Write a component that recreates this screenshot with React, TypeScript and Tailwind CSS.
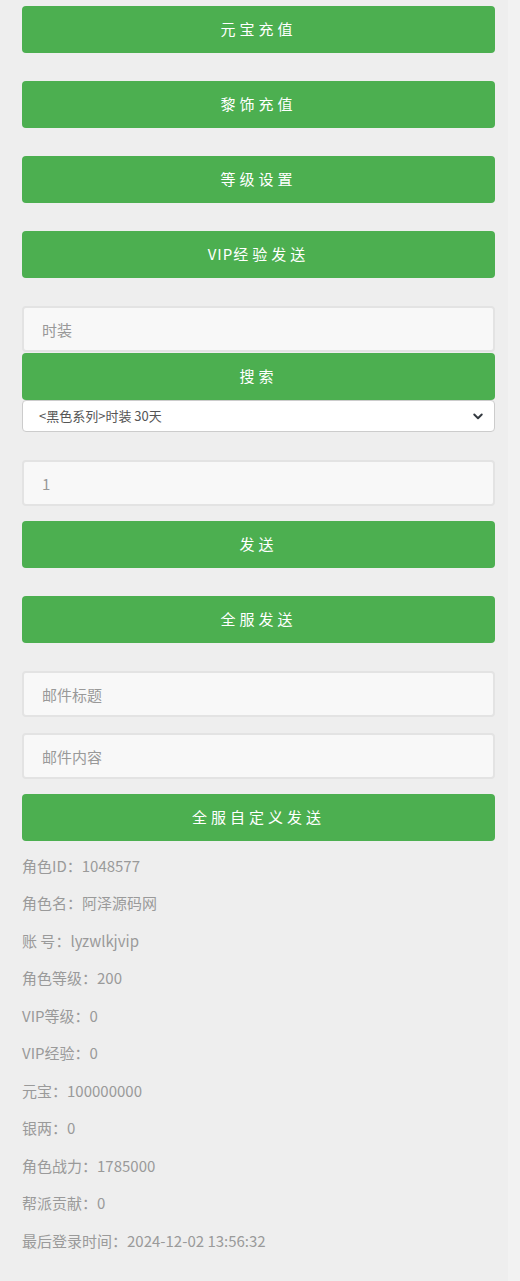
const font = { fontFamily: '"Noto Sans CJK SC", "Noto Sans", sans-serif' };

function GreenButton({ label, className = "" }: { label: string; className?: string }) {
  return (
    <button
      className={`w-full h-[47px] rounded-[4px] bg-[#4caf50] text-white text-[15px] tracking-[4px] flex items-center justify-center ${className}`}
    >
      {label}
    </button>
  );
}

function TextInput({ placeholder, className = "" }: { placeholder: string; className?: string }) {
  return (
    <input
      placeholder={placeholder}
      className={`w-full h-[46px] rounded-[4px] border-2 border-[#e3e3e3] bg-[#f8f8f8] pl-[18px] text-[15px] text-[#999] placeholder:text-[#999] outline-none ${className}`}
    />
  );
}

const info: [string, string][] = [
  ["角色ID", "1048577"],
  ["角色名", "阿泽源码网"],
  ["账 号", "lyzwlkjvip"],
  ["角色等级", "200"],
  ["VIP等级", "0"],
  ["VIP经验", "0"],
  ["元宝", "100000000"],
  ["银两", "0"],
  ["角色战力", "1785000"],
  ["帮派贡献", "0"],
  ["最后登录时间", "2024-12-02 13:56:32"],
];

export default function App() {
  return (
    <div className="flex min-h-[1281px] bg-[#f2f2f2]" style={font}>
      <div className="w-[508px] bg-[#eeeeee] px-[22px] pt-[6px] pb-[24px] box-border">
        <div className="w-[473px] flex flex-col">
          <GreenButton label="元宝充值" />
          <GreenButton label="黎饰充值" className="mt-[28px]" />
          <GreenButton label="等级设置" className="mt-[28px]" />
          <button className="mt-[28px] w-full h-[47px] rounded-[4px] bg-[#4caf50] text-white text-[15px] flex items-center justify-center">
            <span className="tracking-[1px]">VIP</span>
            <span className="tracking-[4px]">经验发送</span>
          </button>

          <TextInput placeholder="时装" className="mt-[28px]" />
          <GreenButton label="搜索" className="mt-[1px]" />
          <div className="relative h-[32px] rounded-[4px] border border-[#cccccc] bg-white flex items-center pl-[16px] text-[13px] text-[#555]">
            &lt;黑色系列&gt;时装 30天
            <svg
              className="absolute right-[10px] top-1/2 -translate-y-1/2"
              width="12"
              height="12"
              viewBox="0 0 16 16"
              fill="none"
              stroke="#343a40"
              strokeWidth="2.6"
              strokeLinecap="round"
              strokeLinejoin="round"
            >
              <path d="M3 6l5 5 5-5" />
            </svg>
          </div>

          <TextInput placeholder="1" className="mt-[28px]" />
          <GreenButton label="发送" className="mt-[15px]" />
          <GreenButton label="全服发送" className="mt-[28px]" />

          <TextInput placeholder="邮件标题" className="mt-[28px]" />
          <TextInput placeholder="邮件内容" className="mt-[16px]" />
          <GreenButton label="全服自定义发送" className="mt-[15px]" />

          <div className="mt-[6px] flex flex-col text-[15px] text-[#9a9a9a]">
            {info.map(([k, v]) => (
              <div key={k} className="h-[37.5px] flex items-center">
                {k}：{v}
              </div>
            ))}
          </div>
        </div>
      </div>
    </div>
  );
}
